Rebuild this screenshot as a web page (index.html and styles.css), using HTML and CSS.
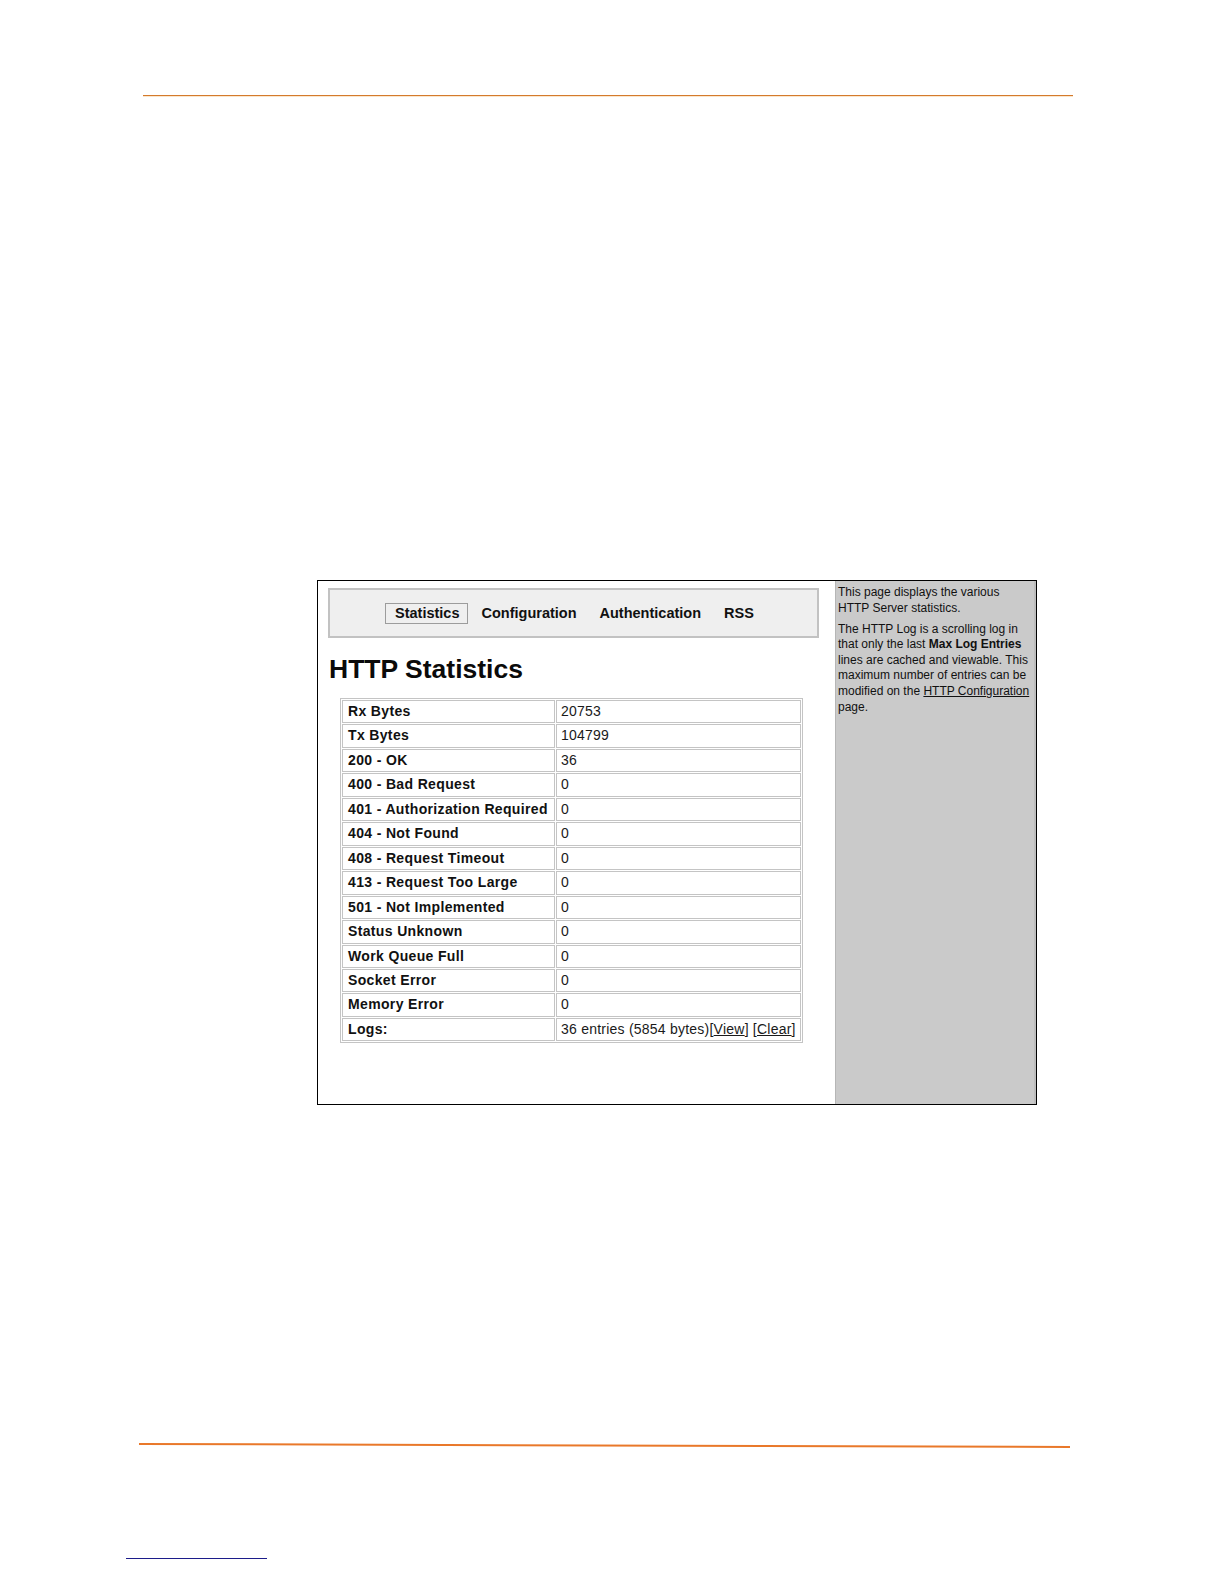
FILE: index.html
```html
<!DOCTYPE html>
<html>
<head>
<meta charset="utf-8">
<title>HTTP Statistics</title>
<link rel="stylesheet" href="styles.css">
</head>
<body>
<div class="page">
  <div class="rule-top"></div>
  <div class="figure">
    <div class="main">
      <div class="nav">
        <span class="tab active">Statistics</span>
        <span class="tab">Configuration</span>
        <span class="tab">Authentication</span>
        <span class="tab">RSS</span>
      </div>
      <h1 class="title">HTTP Statistics</h1>
      <table class="stats">
        <tr><td class="k">Rx Bytes</td><td class="v">20753</td></tr>
        <tr><td class="k">Tx Bytes</td><td class="v">104799</td></tr>
        <tr><td class="k">200 - OK</td><td class="v">36</td></tr>
        <tr><td class="k">400 - Bad Request</td><td class="v">0</td></tr>
        <tr><td class="k">401 - Authorization Required</td><td class="v">0</td></tr>
        <tr><td class="k">404 - Not Found</td><td class="v">0</td></tr>
        <tr><td class="k">408 - Request Timeout</td><td class="v">0</td></tr>
        <tr><td class="k">413 - Request Too Large</td><td class="v">0</td></tr>
        <tr><td class="k">501 - Not Implemented</td><td class="v">0</td></tr>
        <tr><td class="k">Status Unknown</td><td class="v">0</td></tr>
        <tr><td class="k">Work Queue Full</td><td class="v">0</td></tr>
        <tr><td class="k">Socket Error</td><td class="v">0</td></tr>
        <tr><td class="k">Memory Error</td><td class="v">0</td></tr>
        <tr><td class="k">Logs:</td><td class="v">36 entries (5854 bytes)[<a class="lnk">View</a>] [<a class="lnk">Clear</a>]</td></tr>
      </table>
    </div>
    <div class="side">
      <p>This page displays the various<br>HTTP Server statistics.</p>
      <p>The HTTP Log is a scrolling log in<br>that only the last <b>Max Log Entries</b><br>lines are cached and viewable. This<br>maximum number of entries can be<br>modified on the <a class="lnk">HTTP Configuration</a><br>page.</p>
    </div>
  </div>
  <div class="rule-bottom"></div>
  <div class="rule-foot"></div>
</div>
</body>
</html>
```

FILE: styles.css
```css
html, body {
  margin: 0;
  padding: 0;
  background: #ffffff;
}
.page {
  width: 1224px;
  height: 1584px;
  overflow: hidden;
  font-family: "Liberation Sans", Arial, sans-serif;
  color: #111111;
}
.rule-top {
  margin: 95px 0 0 143px;
  width: 930px;
  height: 1px;
  background: #d47a2c;
  border-bottom: 1px solid #fbe6cc;
}
.figure {
  margin: 483px 0 0 317px;
  width: 720px;
  height: 525px;
  box-sizing: border-box;
  border: 1px solid #000000;
  display: flex;
}
.main {
  width: 517px;
  flex: none;
}
.nav {
  margin: 7px 16px 0 10px;
  height: 50px;
  box-sizing: border-box;
  border: 2px solid #c2c2c2;
  background: #efefef;
  display: flex;
  align-items: center;
  gap: 3px;
  padding-left: 55px;
}
.tab {
  font-weight: bold;
  font-size: 14.5px;
  line-height: 19px;
  padding: 0 10px;
  color: #111111;
}
.tab.active {
  border: 1px solid #9c9c9c;
  padding: 0 8px 0 9px;
}
.title {
  margin: 16px 0 0 11px;
  font-size: 26.5px;
  line-height: 30px;
  font-weight: bold;
  color: #0a0a0a;
}
.stats {
  margin: 14px 0 0 22px;
  width: 463px;
  table-layout: fixed;
  border-collapse: separate;
  border-spacing: 1px;
  border: 1px solid #c4c4c4;
  font-size: 14px;
}
.stats td {
  border: 1px solid #c4c4c4;
  padding: 0;
  line-height: 21.45px;
  white-space: nowrap;
}
.stats td.k {
  width: 213px;
  box-sizing: border-box;
  padding-left: 5px;
  font-weight: bold;
  letter-spacing: 0.35px;
}
.stats td.v {
  padding-left: 4px;
  letter-spacing: 0.23px;
  color: #1a1a1a;
}
.lnk {
  text-decoration: underline;
  color: inherit;
}
.side {
  flex: 1;
  background: #cacaca;
  border-left: 1px solid #b6b6b6;
  border-right: 2px solid #bdbdbd;
  padding: 4px 0 0 2px;
  font-size: 12px;
  line-height: 15.6px;
  color: #111111;
  white-space: nowrap;
}
.side p {
  margin: 0 0 5.4px 0;
}
.rule-bottom {
  margin: 338px 0 0 139px;
  width: 931px;
  height: 2px;
  background: #e9782a;
  transform: rotate(0.18deg);
  transform-origin: left center;
}
.rule-foot {
  margin: 113px 0 0 126px;
  width: 141px;
  height: 1px;
  background: #1c1c8a;
}
```
